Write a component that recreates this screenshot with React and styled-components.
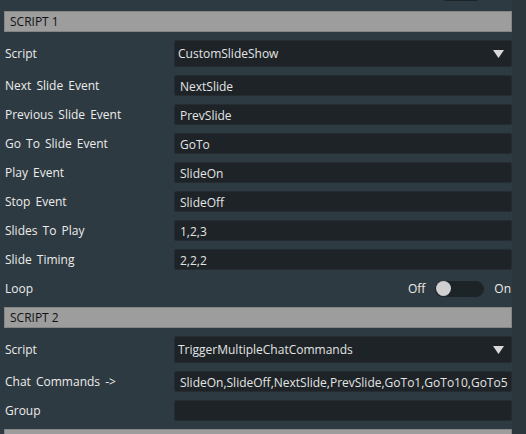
import React from "react";
import styled, { createGlobalStyle } from "styled-components";

const GlobalStyle = createGlobalStyle`
  html, body {
    margin: 0;
    padding: 0;
    background: #2e3a41;
    overflow: hidden;
  }
  body {
    font-family: "Open Sans", "DejaVu Sans", sans-serif;
    font-size: 12px;
    color: #ececec;
  }
`;

const Page = styled.div`
  display: flex;
  height: 434px;
  overflow: hidden;
`;

const Main = styled.div`
  width: 508px;
  padding-left: 4px;
  display: flex;
  flex-direction: column;
  gap: 8px;
  margin-top: -18px;
`;

const ScrollStrip = styled.div`
  flex: 1;
  background: #2b363c;
`;

const SectionHeader = styled.div`
  height: 19px;
  background: #9d9d9d;
  border: 1px solid #858585;
  color: #121212;
  font-weight: 500;
  font-size: 12px;
  display: flex;
  align-items: center;
  padding-left: 5px;
  flex-shrink: 0;
`;

const Row = styled.div`
  display: grid;
  grid-template-columns: 170px 1fr;
  align-items: center;
  height: ${(p) => (p.$tall ? 27 : 21)}px;
  flex-shrink: 0;
`;

const Label = styled.div`
  padding-left: 1px;
  word-spacing: 2px;
  white-space: nowrap;
`;

const Field = styled.div`
  height: 100%;
  box-sizing: border-box;
  background: #1d2327;
  border: 1px solid #252c31;
  border-radius: 2px;
  display: flex;
  align-items: center;
  padding: ${(p) => (p.$select ? "0 7px 0 3px" : "0 5px")};
  color: #e4e4e4;
  white-space: nowrap;
  overflow: hidden;
`;

const FieldText = styled.span`
  flex: 1;
  padding-top: ${(p) => (p.$select ? 0 : 2)}px;
`;

const ToggleGroup = styled.div`
  display: flex;
  align-items: center;
  justify-content: flex-end;
  gap: 10px;
  padding-right: ${(p) => (p.$bare ? 29 : 1)}px;
`;

const Track = styled.div`
  width: ${(p) => (p.$on ? 44 : 49)}px;
  height: 16px;
  border-radius: 8px;
  background: #1d2428;
  display: flex;
  align-items: center;
  justify-content: ${(p) => (p.$on ? "flex-end" : "flex-start")};
  padding: 0 1px;
  box-sizing: border-box;
`;

const Knob = styled.div`
  width: 15px;
  height: 15px;
  border-radius: 50%;
  background: #d0d0d0;
`;

const Arrow = () => (
  <svg width="11" height="8" viewBox="0 0 11 8">
    <polygon points="0,0 11,0 5.5,8" fill="#d9d9d9" />
  </svg>
);

const InputRow = ({ label, value }) => (
  <Row>
    <Label>{label}</Label>
    <Field>
      <FieldText>{value}</FieldText>
    </Field>
  </Row>
);

const SelectRow = ({ label, value }) => (
  <Row $tall>
    <Label>{label}</Label>
    <Field $select>
      <FieldText $select>{value}</FieldText>
      <Arrow />
    </Field>
  </Row>
);

const ToggleRow = ({ label, on }) => (
  <Row>
    <Label>{label}</Label>
    <ToggleGroup>
      <span>Off</span>
      <Track $on={on}>
        <Knob />
      </Track>
      <span>On</span>
    </ToggleGroup>
  </Row>
);

const PartialToggleRow = () => (
  <Row>
    <Label />
    <ToggleGroup $bare>
      <Track $on>
        <Knob />
      </Track>
    </ToggleGroup>
  </Row>
);

export default function App() {
  return (
    <>
      <GlobalStyle />
      <Page>
        <Main>
          <PartialToggleRow />
          <SectionHeader>SCRIPT 1</SectionHeader>
          <SelectRow label="Script" value="CustomSlideShow" />
          <InputRow label="Next Slide Event" value="NextSlide" />
          <InputRow label="Previous Slide Event" value="PrevSlide" />
          <InputRow label="Go To Slide Event" value="GoTo" />
          <InputRow label="Play Event" value="SlideOn" />
          <InputRow label="Stop Event" value="SlideOff" />
          <InputRow label="Slides To Play" value="1,2,3" />
          <InputRow label="Slide Timing" value="2,2,2" />
          <ToggleRow label="Loop" on={false} />
          <SectionHeader>SCRIPT 2</SectionHeader>
          <SelectRow label="Script" value="TriggerMultipleChatCommands" />
          <InputRow
            label="Chat Commands ->"
            value="SlideOn,SlideOff,NextSlide,PrevSlide,GoTo1,GoTo10,GoTo5"
          />
          <InputRow label="Group" value="" />
          <SectionHeader />
        </Main>
        <ScrollStrip />
      </Page>
    </>
  );
}
